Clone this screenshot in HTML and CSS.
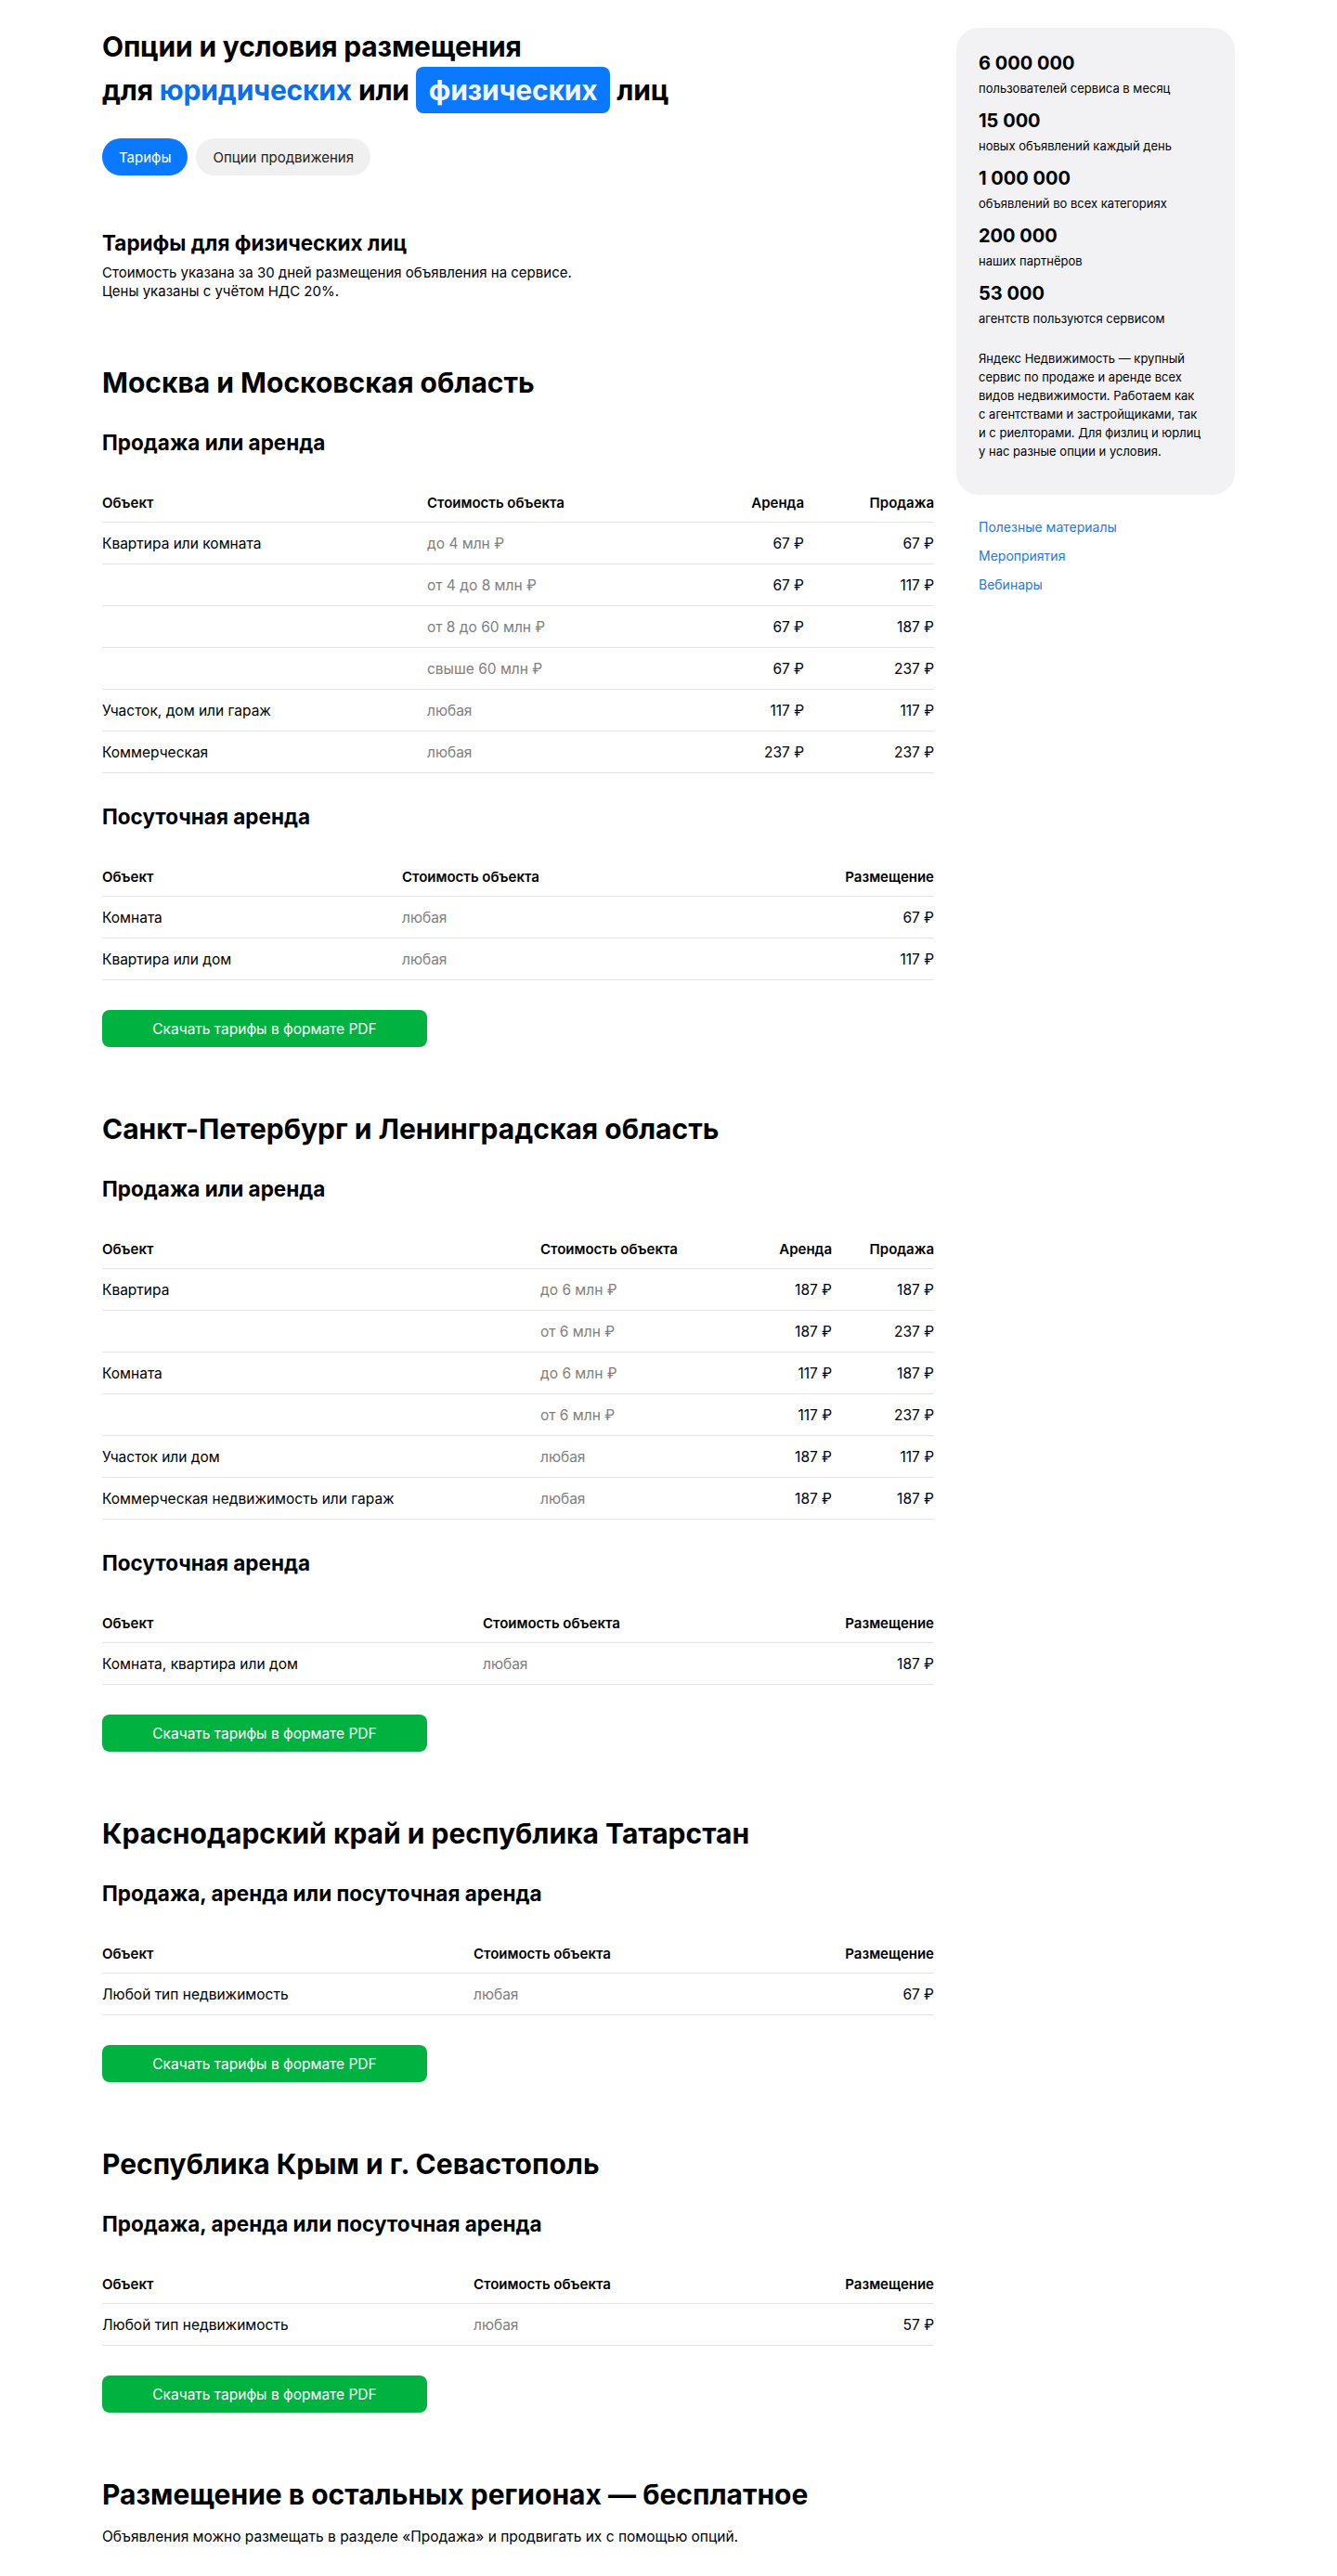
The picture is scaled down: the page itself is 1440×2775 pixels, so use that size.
FILE: index.html
```html
<!DOCTYPE html>
<html lang="ru">
<head>
<meta charset="utf-8">
<title>Опции и условия размещения</title>
<link rel="stylesheet" href="styles.css">
</head>
<body>
<div class="page">
  <main class="content">
    <h1 class="title">Опции и условия размещения<br>для <span class="title-link">юридических</span> или <span class="title-chip">физических</span> лиц</h1>
    <nav class="tabs">
      <a class="tab tab-active">Тарифы</a>
      <a class="tab">Опции продвижения</a>
    </nav>

    <section class="intro">
      <h2 class="intro-title">Тарифы для физических лиц</h2>
      <p class="intro-text">Стоимость указана за 30 дней размещения объявления на сервисе.<br>Цены указаны с учётом НДС 20%.</p>
    </section>

    <section class="region">
      <h2 class="region-title">Москва и Московская область</h2>
      <h3 class="sub-title">Продажа или аренда</h3>
      <table class="tariffs">
        <colgroup><col class="w-350"><col><col class="w-120"><col class="w-140"></colgroup>
        <thead><tr><th>Объект</th><th>Стоимость объекта</th><th class="num">Аренда</th><th class="num">Продажа</th></tr></thead>
        <tbody>
          <tr><td>Квартира или комната</td><td class="cost">до 4 млн ₽</td><td class="num">67 ₽</td><td class="num">67 ₽</td></tr>
          <tr><td></td><td class="cost">от 4 до 8 млн ₽</td><td class="num">67 ₽</td><td class="num">117 ₽</td></tr>
          <tr><td></td><td class="cost">от 8 до 60 млн ₽</td><td class="num">67 ₽</td><td class="num">187 ₽</td></tr>
          <tr><td></td><td class="cost">свыше 60 млн ₽</td><td class="num">67 ₽</td><td class="num">237 ₽</td></tr>
          <tr><td>Участок, дом или гараж</td><td class="cost">любая</td><td class="num">117 ₽</td><td class="num">117 ₽</td></tr>
          <tr><td>Коммерческая</td><td class="cost">любая</td><td class="num">237 ₽</td><td class="num">237 ₽</td></tr>
        </tbody>
      </table>
      <h3 class="sub-title sub-title-next">Посуточная аренда</h3>
      <table class="tariffs">
        <colgroup><col class="w-323"><col><col class="w-200"></colgroup>
        <thead><tr><th>Объект</th><th>Стоимость объекта</th><th class="num">Размещение</th></tr></thead>
        <tbody>
          <tr><td>Комната</td><td class="cost">любая</td><td class="num">67 ₽</td></tr>
          <tr><td>Квартира или дом</td><td class="cost">любая</td><td class="num">117 ₽</td></tr>
        </tbody>
      </table>
      <a class="pdf-btn">Скачать тарифы в формате PDF</a>
    </section>

    <section class="region">
      <h2 class="region-title">Санкт-Петербург и Ленинградская область</h2>
      <h3 class="sub-title">Продажа или аренда</h3>
      <table class="tariffs">
        <colgroup><col class="w-472"><col><col class="w-100"><col class="w-110"></colgroup>
        <thead><tr><th>Объект</th><th>Стоимость объекта</th><th class="num">Аренда</th><th class="num">Продажа</th></tr></thead>
        <tbody>
          <tr><td>Квартира</td><td class="cost">до 6 млн ₽</td><td class="num">187 ₽</td><td class="num">187 ₽</td></tr>
          <tr><td></td><td class="cost">от 6 млн ₽</td><td class="num">187 ₽</td><td class="num">237 ₽</td></tr>
          <tr><td>Комната</td><td class="cost">до 6 млн ₽</td><td class="num">117 ₽</td><td class="num">187 ₽</td></tr>
          <tr><td></td><td class="cost">от 6 млн ₽</td><td class="num">117 ₽</td><td class="num">237 ₽</td></tr>
          <tr><td>Участок или дом</td><td class="cost">любая</td><td class="num">187 ₽</td><td class="num">117 ₽</td></tr>
          <tr><td>Коммерческая недвижимость или гараж</td><td class="cost">любая</td><td class="num">187 ₽</td><td class="num">187 ₽</td></tr>
        </tbody>
      </table>
      <h3 class="sub-title sub-title-next">Посуточная аренда</h3>
      <table class="tariffs">
        <colgroup><col class="w-410"><col><col class="w-200"></colgroup>
        <thead><tr><th>Объект</th><th>Стоимость объекта</th><th class="num">Размещение</th></tr></thead>
        <tbody>
          <tr><td>Комната, квартира или дом</td><td class="cost">любая</td><td class="num">187 ₽</td></tr>
        </tbody>
      </table>
      <a class="pdf-btn">Скачать тарифы в формате PDF</a>
    </section>

    <section class="region">
      <h2 class="region-title">Краснодарский край и республика Татарстан</h2>
      <h3 class="sub-title">Продажа, аренда или посуточная аренда</h3>
      <table class="tariffs">
        <colgroup><col class="w-400"><col><col class="w-200"></colgroup>
        <thead><tr><th>Объект</th><th>Стоимость объекта</th><th class="num">Размещение</th></tr></thead>
        <tbody>
          <tr><td>Любой тип недвижимость</td><td class="cost">любая</td><td class="num">67 ₽</td></tr>
        </tbody>
      </table>
      <a class="pdf-btn">Скачать тарифы в формате PDF</a>
    </section>

    <section class="region">
      <h2 class="region-title">Республика Крым и г. Севастополь</h2>
      <h3 class="sub-title">Продажа, аренда или посуточная аренда</h3>
      <table class="tariffs">
        <colgroup><col class="w-400"><col><col class="w-200"></colgroup>
        <thead><tr><th>Объект</th><th>Стоимость объекта</th><th class="num">Размещение</th></tr></thead>
        <tbody>
          <tr><td>Любой тип недвижимость</td><td class="cost">любая</td><td class="num">57 ₽</td></tr>
        </tbody>
      </table>
      <a class="pdf-btn">Скачать тарифы в формате PDF</a>
    </section>

    <section class="region">
      <h2 class="region-title">Размещение в остальных регионах — бесплатное</h2>
      <p class="free-text">Объявления можно размещать в разделе «Продажа» и продвигать их с помощью опций.</p>
    </section>
  </main>

  <aside class="sidebar">
    <div class="stats-card">
      <div class="stat"><div class="stat-value">6 000 000</div><div class="stat-label">пользователей сервиса в месяц</div></div>
      <div class="stat"><div class="stat-value">15 000</div><div class="stat-label">новых объявлений каждый день</div></div>
      <div class="stat"><div class="stat-value">1 000 000</div><div class="stat-label">объявлений во всех категориях</div></div>
      <div class="stat"><div class="stat-value">200 000</div><div class="stat-label">наших партнёров</div></div>
      <div class="stat"><div class="stat-value">53 000</div><div class="stat-label">агентств пользуются сервисом</div></div>
      <p class="about">Яндекс Недвижимость — крупный<br>сервис по продаже и аренде всех<br>видов недвижимости. Работаем как<br>с агентствами и застройщиками, так<br>и с риелторами. Для физлиц и юрлиц<br>у нас разные опции и условия.</p>
    </div>
    <ul class="side-links">
      <li><a class="side-link">Полезные материалы</a></li>
      <li><a class="side-link">Мероприятия</a></li>
      <li><a class="side-link">Вебинары</a></li>
    </ul>
  </aside>
</div>
</body>
</html>
```
FILE: styles.css
```css
* { box-sizing: border-box; }

body {
  margin: 0;
  background: #fff;
  color: #000;
  font-family: "Inter", "Roboto", "DejaVu Sans", sans-serif;
}

.page {
  width: 1220px;
  margin: 0 auto;
  padding-top: 27px;
  display: grid;
  grid-template-columns: 1fr 300px;
  column-gap: 24px;
  align-items: start;
}

.content { min-width: 0; }

.title {
  margin: 0;
  font-size: 30px;
  line-height: 47px;
  font-weight: 700;
  letter-spacing: -0.2px;
}

.title-link { color: #0a6fec; }

.title-chip {
  display: inline-block;
  margin: -3px 0;
  background: #0a78ff;
  color: #eef5ff;
  border-radius: 8px;
  padding: 7px 14px;
  line-height: 36px;
}

.tabs {
  display: flex;
  gap: 9px;
  margin-top: 28px;
}

.tab {
  display: inline-flex;
  align-items: center;
  height: 40px;
  padding: 0 18px;
  border-radius: 20px;
  background: #f0f0f0;
  color: #222;
  font-size: 15px;
}

.tab-active {
  background: #0a78ff;
  color: #fff;
}

.intro { margin-top: 59px; }

.intro-title {
  margin: 0;
  font-size: 22.5px;
  line-height: 28px;
  font-weight: 700;
}

.intro-text {
  margin: 8px 0 0;
  font-size: 15px;
  line-height: 20px;
}

.region { margin-top: 70px; }

.region-title {
  margin: 0;
  font-size: 30px;
  line-height: 36px;
  font-weight: 700;
}

.sub-title {
  margin: 33px 0 27px;
  font-size: 22.5px;
  line-height: 28px;
  font-weight: 700;
}

.sub-title-next { margin-top: 33px; }

.tariffs {
  width: 100%;
  border-collapse: collapse;
  table-layout: fixed;
  font-size: 15.5px;
  line-height: 20px;
}

.w-100 { width: 100px; }
.w-110 { width: 110px; }
.w-120 { width: 120px; }
.w-140 { width: 140px; }
.w-200 { width: 200px; }
.w-323 { width: 323px; }
.w-350 { width: 350px; }
.w-400 { width: 400px; }
.w-410 { width: 410px; }
.w-472 { width: 472px; }

.tariffs th {
  padding: 14px 0 10px;
  text-align: left;
  font-size: 15px;
  font-weight: 600;
  border-bottom: 1px solid #e3e3e3;
}

.tariffs td {
  padding: 13px 0 11px;
  border-bottom: 1px solid #e3e3e3;
  white-space: nowrap;
}

.tariffs .num { text-align: right; }

.tariffs .cost { color: #808080; }

.pdf-btn {
  display: flex;
  align-items: center;
  justify-content: center;
  width: 350px;
  height: 40px;
  margin-top: 32px;
  border-radius: 8px;
  background: #00b341;
  color: #fff;
  font-size: 15.5px;
}

.free-text {
  margin: 18px 0 0;
  font-size: 15.5px;
  line-height: 20px;
}

.sidebar { margin-top: 3px; }

.stats-card {
  background: #f2f2f4;
  border-radius: 24px;
  padding: 24px 24px 37px;
}

.stat + .stat { margin-top: 12px; }

.stat-value {
  font-size: 20px;
  line-height: 28px;
  font-weight: 700;
}

.stat-label {
  margin-top: 4px;
  font-size: 13px;
  line-height: 18px;
}

.about {
  margin: 24px 0 0;
  font-size: 13px;
  line-height: 20px;
}

.side-links {
  list-style: none;
  margin: 24px 0 0;
  padding: 0 24px;
  display: flex;
  flex-direction: column;
  gap: 10px;
}

.side-link {
  color: #2678e4;
  font-size: 14px;
  line-height: 20px;
}
```
